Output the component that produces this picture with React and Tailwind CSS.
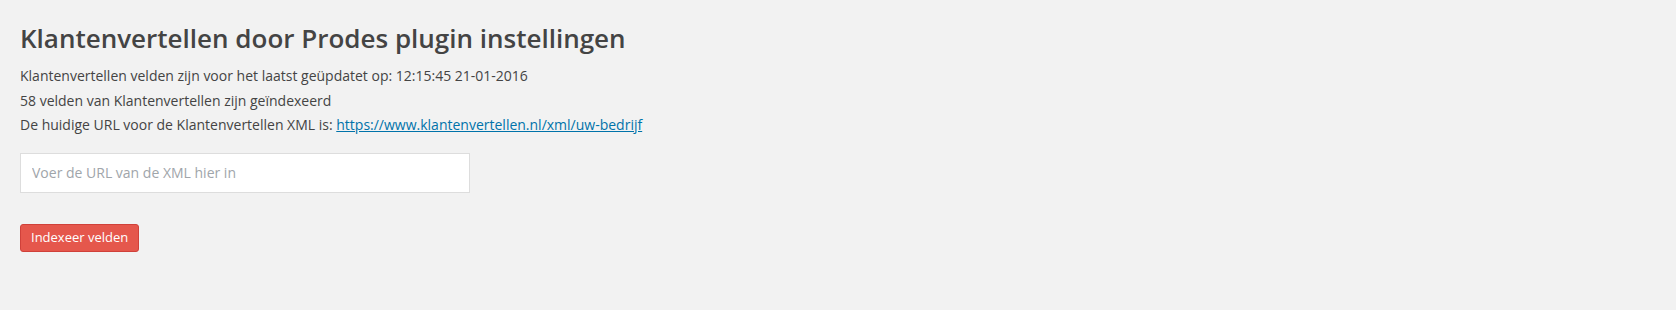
import React from "react";

export default function App() {
  return (
    <div
      className="min-h-[310px] w-full bg-[#f2f2f2] px-5 pt-[22px] text-[14px] text-[#444]"
      style={{ fontFamily: '"Open Sans", "Liberation Sans", sans-serif' }}
    >
      <h1 className="text-[26px] font-semibold leading-[32px] text-[#444]">
        Klantenvertellen door Prodes plugin instellingen
      </h1>
      <div className="mt-[10px] leading-[24.5px]">
        <p>Klantenvertellen velden zijn voor het laatst geüpdatet op: 12:15:45 21-01-2016</p>
        <p>58 velden van Klantenvertellen zijn geïndexeerd</p>
        <p>
          De huidige URL voor de Klantenvertellen XML is:{" "}
          <a href="#" className="text-[#0073aa] underline">
            https://www.klantenvertellen.nl/xml/uw-bedrijf
          </a>
        </p>
      </div>
      <input
        type="text"
        placeholder="Voer de URL van de XML hier in"
        className="mt-[15px] block h-[40px] w-[450px] border border-[#ddd] bg-white px-[11px] text-[14px] text-[#32373c] placeholder:text-[#a0a5aa] outline-none"
      />
      <button className="mt-[31px] h-[28px] rounded-[3px] border border-[#d0413a] bg-[#e5574c] px-[10px] text-[13px] text-white">
        Indexeer velden
      </button>
    </div>
  );
}
